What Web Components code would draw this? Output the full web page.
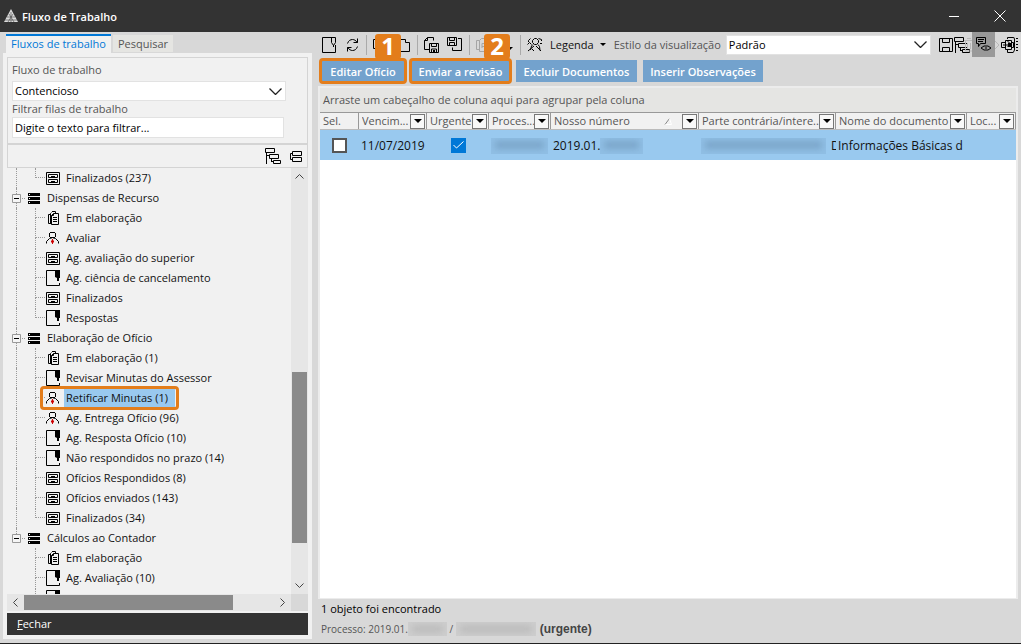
<!DOCTYPE html>
<html lang="pt-BR">
<head>
<meta charset="utf-8">
<title>Fluxo de Trabalho</title>
<style>
html, body { margin: 0; height: 100%; }
body { font: 11px/16px "Open Sans", "Noto Sans", sans-serif; color: #111; background: #d8d8d8; overflow: hidden; }
</style>
</head>
<body>
<flow-app></flow-app>
<script>
const define = (name, html, setup) => {
  const template = document.createElement('template');
  template.innerHTML = html;
  customElements.define(name, class extends HTMLElement {
    constructor() {
      super();
      this.attachShadow({ mode: 'open' }).append(template.content.cloneNode(true));
    }
    connectedCallback() { if (setup) setup.call(this, this.shadowRoot); }
  });
};

/* Icons: [width, height, markup]; strokes sit on half pixels to stay sharp */
const ICONS = {
  logo: [14, 14, '<path d="M7 0L14 13H0Z" fill="#ddd" stroke="none"/><path d="M7 3v10M5 5l5 8M9 5l-5 8M3 8h8M1 11h12" stroke="#555" stroke-width=".7"/>'],
  min: [11, 11, '<path d="M0 5.500h10" stroke="#fff"/>'],
  close: [12, 12, '<path d="M.5.5l11 11M11.500.5l-11 11" stroke="#fff"/>'],
  cabinet: [14, 13, '<path d="M.5.5h13v12H.5zM2.500 2.500h9v3h-9zM2.500 7.500h9v3h-9zM5 4.500h4M5 9.500h4"/>'],
  note: [14, 16, '<path d="M.5.5h13v15H.5z"/><path d="M9 0h5v7l-1 1v3h-2V8L9 7z" fill="#000" stroke="none"/><path d="M13.500 8v5" stroke="#f1f1f1"/>'],
  docs: [14, 14, '<path d="M4 3.500H2.500v9H5M4.500 12V2.500l1-1M6 .500h3.500v2M5.500 4.500v9h7v-11h-5zM5.500 4.500h2v-2M7 6.500h4M7 8.500h4M7 10.500h4"/>'],
  person: [13, 12, '<path d="M4 .5h5M3.500 1v4M9.500 1v4M4 5.500h5M5 6v1M8 6v1M4.500 6.500h-1L.5 9.500v2M8.500 6.500h1l3 3v2"/><path d="M6.500 7v5" stroke="#c00"/><path d="M5 8.500h3v2H5z" fill="#c00" stroke="none"/>'],
  list: [12, 11, '<path d="M0 0h12v3H0zM0 4h12v3H0zM0 8h12v3H0z" fill="#000" stroke="none"/><path d="M1 1.500h1M1 5.500h1M1 9.500h1" stroke="#fff"/>'],
  tree: [16, 16, '<path d="M.5.5h9v4h-9zM1.500 5v11M1.500 7.500h3M4.500 6.500h9v4h-9zM6.500 11v3M6.500 13.500h2M8.500 12.500h7v3h-7z"/>'],
  collapse: [12, 11, '<path d="M2.500.5h9v4h-9zM2.500 6.500h9v4h-9zM2 2.500H.5v6H2"/>'],
  minus: [9, 9, '<path d="M.5.5h8v8h-8z" stroke="#999" fill="#f5f5f5"/><path d="M2 4.500h5"/>'],
  page: [14, 16, '<path d="M.5.5h13v5l-2 3-2-3v-5M.5.500v15h13V8M11.500 8v2"/>'],
  refresh: [13, 14, '<path d="M1.500 5.500c1-3 3-4 5-4 2 0 3 1 5 3M11.500.500v4h-4M11.500 8.500c-1 3-3 4-5 4-2 0-3-1-5-3M1.500 13.500v-4h4"/>'],
  folders: [37, 14, '<path d="M4 1.500H.5v9H4M26.500 13.500h10v-9h-4v-3h-6z"/>'],
  savepage: [15, 16, '<path d="M5.500 12.500h-5v-9l3-3h6v3M3.500.500v3h-3M5.500 6.500h9v9h-9zM7.500 6.500v3h5v-3M7.500 15v-3h5v3"/><path d="M9 13h2v2H9z" fill="#000" stroke="none"/>'],
  pagesave: [15, 15, '<path d="M.5.5h9v8h-9zM2.500.500v3h5v-3M2.500 8V5.500h5V8M11 1.500h3.500v12h-9v-3"/>'],
  preview: [14, 14, '<path d="M3.500 11.500h-3v-9h3M3.500 13.500v-11l2-2h7v13zM6 10V5.500h3v3H6" stroke="#a5a5a5"/>'],
  people: [15, 15, '<path d="M5.500 3.500l2-2h2l2 2v2l-2 2h-2l-2-2zM6 7.500L4.500 9l-1 4M11 7.500l1.500 2 .5 4M1.500 5V3.500l2-2M.5 7.500l2-2 2 2M14.500 4V2.500l-3-1M13 6.500h2M1 14l6-5M14 14L9 9M5 12l2 2"/>'],
  caret: [6, 3, '<path d="M0 0h6L3 3z" fill="#000" stroke="none"/>'],
  filter: [8, 4, '<path d="M0 0h8L4 4z" fill="#000" stroke="none"/>'],
  sort: [8, 7, '<path d="M1 6.500L5.500.500" stroke="#888"/><path d="M5.500.5l2 6h-6" stroke="#fff"/>'],
  floppy: [14, 14, '<path d="M.5.5h13v13H.5zM3.500.500v4h7v-4M3.500 13V9.500h7V13"/>'],
  trash: [11, 14, '<path d="M0 2.500h10M3 .5h4M1.500 3v10h7V3M3.500 5v6M6.500 5v6" stroke="#b8b8b8"/>'],
  comment: [17, 15, '<path d="M1.500.5h9v6h-5l-2 3v-3h-2zM3 2.500h6M3 4.500h5M6 11l3-2h4l3 2-3 2H9zM10 11h2"/>'],
  diamond: [5, 8, '<path d="M0 0l4 4-4 4" stroke="#b8b8b8"/>'],
  gear: [17, 16, '<path d="M.5 5.500h4v5h-4zM2 8h8M4.500 3.500h6v9h-6zM6.500 4l4 4M6.500 10l4-4M6.500 2V.5h6M6.500 13v2.500h6M12.500 0l1 2v11l-1 2M15 1.500h2M15 4.500h2M15 7.500h2M15 10.500h2M15 13.500h2M10.500 5.500h2v5h-2"/><path d="M7 6h4v4H7z" fill="#000" stroke="none"/>'],
  up: [9, 5, '<path d="M.5 4.500l4-4 4 4" stroke="#444"/>'],
  down: [9, 5, '<path d="M.5.5l4 4 4-4" stroke="#444"/>'],
  left: [5, 9, '<path d="M4.500.500l-4 4 4 4" stroke="#444"/>'],
  right: [5, 9, '<path d="M.5.5l4 4-4 4" stroke="#444"/>'],
  chevron: [13, 7, '<path d="M.5.5l6 6 6-6" stroke="#222" stroke-width="1.300"/>'],
  tick: [11, 8, '<path d="M.5 4l3 3L10.500.500" stroke="#fff"/>']
};
customElements.define('ui-icon', class extends HTMLElement {
  connectedCallback() {
    if (this.shadowRoot) return;
    const [w, h, body] = ICONS[this.getAttribute('name')];
    this.attachShadow({ mode: 'open' }).innerHTML =
      `<style>:host{display:block;flex:none;width:${w}px;height:${h}px}svg{display:block}</style>
       <svg width="${w}" height="${h}" viewBox="0 0 ${w} ${h}" fill="none" stroke="#000" aria-hidden="true">${body}</svg>`;
  }
});

define('title-bar', `<style>
:host { display: flex; align-items: center; height: 32px; background: #333; color: #fff; padding: 0 15px 0 4px; }
h1 { flex: 1; margin: 1px 0 0 4px; font-size: 11px; line-height: 16px; font-weight: 600; }
button { border: 0; padding: 0; background: none; display: block; margin-left: 34px; }
</style><ui-icon name="logo"></ui-icon><h1><slot></slot></h1>
<button aria-label="Minimizar"><ui-icon name="min"></ui-icon></button>
<button aria-label="Fechar janela"><ui-icon name="close"></ui-icon></button>`);

define('blurred-text', `<style>
:host { display: inline-block; vertical-align: middle; height: 14px; overflow: hidden; background: var(--a); }
i { display: block; height: 8px; margin: 3px 4px; background: var(--b); filter: blur(3px); }
</style><i></i>`);

define('drop-down', `<style>
:host { display: grid; align-items: center; background: #fff; border: 1px solid #e2e2e2; box-sizing: border-box; }
select { grid-area: 1/1; appearance: none; border: 0; margin: 0; padding: 0 2px; width: 100%; font: inherit; color: #000; background: none; outline: 0; }
ui-icon { grid-area: 1/1; justify-self: end; margin-right: 3px; pointer-events: none; }
</style><select><option></option></select><ui-icon name="chevron"></ui-icon>`, function (root) {
  root.querySelector('select').setAttribute('aria-label', this.getAttribute('label'));
  root.querySelector('option').textContent = this.getAttribute('value');
});

define('scroll-bar', `<style>
:host { display: flex; flex-direction: column; background: #e6e6e6; }
:host([horizontal]) { flex-direction: row; }
button { border: 0; padding: 0; background: none; flex: none; width: 17px; height: 17px; display: grid; place-items: center; }
:host([horizontal]) button { height: 100%; }
.before { flex: var(--before) 0 0; } .thumb { flex: var(--thumb) 0 0; background: #8a8a8a; } .after { flex: var(--after) 0 0; }
:host(:not([horizontal])) .thumb { margin: 0 1px; }
:host([horizontal]) .thumb { margin: 1px 0; }
</style><button class="start" aria-label="Voltar"></button><div class="before"></div><div class="thumb"></div><div class="after"></div><button class="end" aria-label="Avançar"></button>`, function (root) {
  const h = this.hasAttribute('horizontal');
  root.querySelector('.start').innerHTML = `<ui-icon name="${h ? 'left' : 'up'}"></ui-icon>`;
  root.querySelector('.end').innerHTML = `<ui-icon name="${h ? 'right' : 'down'}"></ui-icon>`;
});

define('tree-group', `<style>
:host { display: block; }
.head { display: grid; grid-template-columns: 5px 9px 7px 19px auto; align-items: center; height: 20px; position: relative; justify-content: start; }
.head::before { content: ""; position: absolute; left: 9px; top: 0; bottom: 0; border-left: 1px dotted #999; }
:host([last]) .head::before { bottom: 10px; }
.head > * { position: relative; }
.dots { border-top: 1px dotted #999; margin: 0 3px 0 1px; }
:host([bare]) .head { display: none; }
</style><div class="head"><span></span><ui-icon name="minus"></ui-icon><span class="dots"></span><ui-icon name="list"></ui-icon><span class="name"></span></div><slot></slot>`, function (root) {
  root.querySelector('.name').textContent = this.getAttribute('label') || '';
});

define('tree-item', `<style>
:host { display: grid; grid-template-columns: 9px 19px 11px 18px auto; justify-content: start; height: 20px; position: relative; }
.trunk { grid-column: 2; border-left: 1px dotted #999; }
:host([root-end]) .trunk { border-color: transparent; }
.top, .bottom { border-left: 1px dotted #999; height: 9px; margin-right: 1px; }
.top { border-bottom: 1px dotted #999; }
:host([end]) .bottom { border-color: transparent; }
ui-icon { align-self: center; }
.label { align-self: center; padding: 1px 2px 2px; white-space: nowrap; }
:host([selected]) .label { background: #99c9ef; min-width: 107px; }
:host([selected])::after { content: ""; position: absolute; left: 33px; top: -2px; width: 133px; height: 18px; border: 3px solid #e37d1b; border-radius: 4px; }
</style><span class="trunk"></span><span><div class="top"></div><div class="bottom"></div></span><span class="icon"></span><span class="label"><slot></slot></span>`, function (root) {
  const icon = document.createElement('ui-icon');
  icon.setAttribute('name', this.getAttribute('icon'));
  root.querySelector('.icon')?.replaceWith(icon);
});

define('flow-panel', `<style>
:host { display: flex; flex-direction: column; width: 309px; flex: none; padding: 2px 0 4px 3px; }
.tabs { display: flex; align-items: flex-end; gap: 2px; padding-left: 3px; }
.tabs button { border: 0; margin: 0 0 1px; font: inherit; background: #e5e5e2; color: #555; padding: 1px 5px 0; height: 17px; }
.tabs button.on { height: 19px; margin: 0; background: #f1f1f1; color: #0078d7; border-top: 2px solid #0078d7; padding: 0 5px 1px; }
.card { flex: 1; min-height: 0; background: #f1f1f1; padding: 4px; display: flex; flex-direction: column; }
.box { border: 1px solid #d4d4d4; color: #555; }
.form { padding: 4px 21px 5px 4px; border-bottom: 0; }
label { display: block; line-height: 16px; }
drop-down { height: 20px; margin: 3px 0 0; }
input { display: block; box-sizing: border-box; width: calc(100% - 2px); height: 21px; border: 1px solid #e2e2e2; padding: 0 2px; font: inherit; color: #000; background: #fff; outline: 0; }
.tools { display: flex; justify-content: flex-end; align-items: center; gap: 9px; height: 22px; padding-right: 5px; border-top-width: 2px; }
.tools button { border: 0; padding: 0; background: none; }
.view { flex: 1; min-height: 0; display: grid; grid-template: minmax(0, 1fr) 17px / minmax(0, 1fr) 17px; background: #d8d8d8; }
.tree { overflow: hidden; background: #f1f1f1; }
.v { --before: 187; --thumb: 171; --after: 34; }
.h { --before: 0; --thumb: 209; --after: 41; }
.close { flex: none; margin-top: 2px; height: 22px; border: 0; background: #333; color: #fff; font: inherit; text-align: left; padding: 0 10px; }
</style>
<div class="tabs" role="tablist"><button class="on" role="tab">Fluxos de trabalho</button><button role="tab">Pesquisar</button></div>
<div class="card">
  <div class="box form"><label>Fluxo de trabalho</label><drop-down label="Fluxo de trabalho" value="Contencioso"></drop-down>
  <label for="filter">Filtrar filas de trabalho</label><input id="filter" type="text" value="Digite o texto para filtrar..."></div>
  <div class="box tools"><button aria-label="Expandir"><ui-icon name="tree"></ui-icon></button><button aria-label="Recolher"><ui-icon name="collapse"></ui-icon></button></div>
  <div class="view">
    <div class="tree">
      <tree-group bare><tree-item icon="cabinet" end>Finalizados (237)</tree-item></tree-group>
      <tree-group label="Dispensas de Recurso">
        <tree-item icon="docs">Em elaboração</tree-item>
        <tree-item icon="person">Avaliar</tree-item>
        <tree-item icon="cabinet">Ag. avaliação do superior</tree-item>
        <tree-item icon="note">Ag. ciência de cancelamento</tree-item>
        <tree-item icon="cabinet">Finalizados</tree-item>
        <tree-item icon="note" end>Respostas</tree-item>
      </tree-group>
      <tree-group label="Elaboração de Ofício">
        <tree-item icon="docs">Em elaboração (1)</tree-item>
        <tree-item icon="note">Revisar Minutas do Assessor</tree-item>
        <tree-item icon="person" selected>Retificar Minutas (1)</tree-item>
        <tree-item icon="person">Ag. Entrega Ofício (96)</tree-item>
        <tree-item icon="note">Ag. Resposta Ofício (10)</tree-item>
        <tree-item icon="note">Não respondidos no prazo (14)</tree-item>
        <tree-item icon="cabinet">Ofícios Respondidos (8)</tree-item>
        <tree-item icon="cabinet">Ofícios enviados (143)</tree-item>
        <tree-item icon="cabinet" end>Finalizados (34)</tree-item>
      </tree-group>
      <tree-group label="Cálculos ao Contador" last>
        <tree-item icon="docs" root-end>Em elaboração</tree-item>
        <tree-item icon="note" root-end>Ag. Avaliação (10)</tree-item>
        <tree-item icon="note" root-end></tree-item>
      </tree-group>
    </div>
    <scroll-bar class="v"></scroll-bar>
    <scroll-bar class="h" horizontal></scroll-bar>
  </div>
  <button class="close"><u>F</u>echar</button>
</div>`);

define('tool-bar', `<style>
:host { display: flex; align-items: center; height: 25px; padding: 0 3px 0 4px; color: #555; white-space: nowrap; }
button { border: 0; margin: 0; padding: 0; background: none; font: inherit; color: #111; display: flex; align-items: center; }
hr { width: 1px; height: 20px; border: 0; margin: 0 6px 0 7px; background: #aaa; flex: none; }
.gap { margin-left: 10px; }
.near { margin-left: 8px; }
drop-down { flex: 1; height: 20px; margin: 0 8px 0 5px; }
.on { background: #999; height: 25px; width: 23px; justify-content: center; margin-left: -3px; }
.end { margin-left: 1px; }
.preview { gap: 17px; }
.preview ui-icon[name=caret] { margin-top: 8px; }
.legend { margin: 0 8px; gap: 6px; }
.trash { margin-left: -6px; }
</style>
<button aria-label="Novo"><ui-icon name="page"></ui-icon></button>
<button class="gap" aria-label="Atualizar"><ui-icon name="refresh"></ui-icon></button><hr>
<button aria-label="Abrir"><ui-icon name="folders"></ui-icon></button><hr>
<button aria-label="Salvar documento"><ui-icon name="savepage"></ui-icon></button>
<button class="near" aria-label="Salvar cópia"><ui-icon name="pagesave"></ui-icon></button><hr>
<button class="preview" aria-label="Visualizar"><ui-icon name="preview"></ui-icon><ui-icon name="caret"></ui-icon></button><hr>
<button aria-label="Usuários"><ui-icon name="people"></ui-icon></button>
<button class="legend">Legenda <ui-icon name="caret"></ui-icon></button>
<span>Estilo da visualização</span><drop-down label="Estilo da visualização" value="Padrão"></drop-down>
<button aria-label="Salvar estilo"><ui-icon name="floppy"></ui-icon></button>
<button class="end" aria-label="Agrupar"><ui-icon name="tree"></ui-icon></button>
<button class="trash" aria-label="Excluir"><ui-icon name="trash"></ui-icon></button>
<button class="on" aria-label="Observações"><ui-icon name="comment"></ui-icon></button>
<ui-icon name="diamond"></ui-icon>
<button class="end" aria-label="Configurar"><ui-icon name="gear"></ui-icon></button>`);

define('action-button', `<style>
:host { display: block; position: relative; flex: none; }
button { display: block; box-sizing: border-box; width: 100%; height: 22px; border: 0; padding: 1px 0 0; background: #73a2cd; color: #fff; font: inherit; font-weight: 600; white-space: nowrap; }
:host([step])::before { content: ""; position: absolute; inset: -2px; border: 3px solid #e37d1b; border-radius: 4px; pointer-events: none; }
b { display: none; position: absolute; right: 4px; top: -26px; width: 26px; height: 25px; border-radius: 3px; background: #e37d1b; color: #fff; font-size: 24px; line-height: 24px; font-weight: 700; text-align: center; }
:host([step]) b { display: block; }
:host([step="2"]) b { right: 0; }
</style><button><slot></slot></button><b></b>`, function (root) {
  root.querySelector('b').textContent = this.getAttribute('step') || '';
});

define('data-grid', `<style>
:host { display: block; background: #fff; border: 2px solid #ececec; border-bottom-width: 1px; overflow: hidden; }
.group { height: 24px; line-height: 24px; padding-left: 3px; background: #e5e5e3; color: #555; }
table { width: 100%; table-layout: fixed; border-collapse: separate; border-spacing: 0; }
th { box-sizing: border-box; height: 18px; padding: 0; border-top: 1px solid #999; border-bottom: 1px solid #bbb; background: #f1f1f1; font-weight: 400; color: #555; }
.th { display: flex; align-items: center; height: 16px; padding: 0 1px 0 3px; border-right: 1px solid #999; }
.th span { flex: 1; min-width: 0; overflow: hidden; white-space: nowrap; text-align: left; }
.th button { flex: none; box-sizing: border-box; width: 15px; height: 15px; border: 1px solid #777; background: #f8f8f8; padding: 0; display: grid; place-items: center; }
.th ui-icon[name=sort] { margin-right: 10px; }
td { box-sizing: border-box; height: 30px; padding: 1px 0 0 2px; background: #99c9ef; color: #111; font-size: 12px; line-height: 18px; white-space: nowrap; overflow: hidden; }
td.check { padding: 0; }
.cell { display: flex; align-items: center; overflow: hidden; }
.cell span { overflow: hidden; }
input { appearance: none; display: block; box-sizing: border-box; width: 15px; height: 15px; margin: 0 auto; border: 2px solid #555; background: #fff; }
label { display: grid; place-items: center; }
label > * { grid-area: 1/1; }
input:checked { background: #0078d7; border-color: #0078d7; }
label ui-icon { pointer-events: none; z-index: 1; }
blurred-text { --a: #90bfe5; --b: #7ba6ca; height: 16px; flex: none; }
.cut { width: 5px; margin-left: auto; }
</style>
<div class="group">Arraste um cabeçalho de coluna aqui para agrupar pela coluna</div>
<table><colgroup><col style="width:39px"><col style="width:68px"><col style="width:62px"><col style="width:62px"><col><col style="width:137px"><col style="width:131px"><col style="width:49px"></colgroup>
<thead><tr></tr></thead>
<tbody><tr>
<td class="check"><input type="checkbox" aria-label="Selecionar"></td><td>11/07/2019</td>
<td class="check"><label><input type="checkbox" checked aria-label="Urgente"><ui-icon name="tick"></ui-icon></label></td>
<td><blurred-text style="width:57px"></blurred-text></td>
<td><div class="cell">2019.01.<blurred-text style="width:43px"></blurred-text></div></td>
<td><div class="cell"><blurred-text style="width:125px"></blurred-text><span class="cut">D</span></div></td>
<td><div class="cell">Informações Básicas d</div></td><td></td>
</tr></tbody></table>`, function (root) {
  const row = root.querySelector('thead tr');
  const heads = ['Sel.', 'Vencim...', 'Urgente', 'Proces...', 'Nosso número', 'Parte contrária/intere...', 'Nome do documento', 'Loc...'];
  row.innerHTML = heads.map((t, i) => `<th><div class="th"><span>${t}</span>${i === 4 ? '<ui-icon name="sort"></ui-icon>' : ''}${i ? `<button aria-label="Filtrar ${t}"><ui-icon name="filter"></ui-icon></button>` : ''}</div></th>`).join('');
});

define('flow-app', `<style>
:host { display: flex; flex-direction: column; height: 100vh; box-sizing: border-box; border-bottom: 1px solid #222; background: #d8d8d8; }
.body { flex: 1; min-height: 0; display: flex; }
main { flex: 1; min-width: 0; display: flex; flex-direction: column; margin-left: 6px; }
.actions { display: flex; gap: 6px; padding: 3px; }
data-grid { flex: 1; margin: 1px 3px 0 0; }
footer { padding: 2px 3px 6px; color: #555; }
footer p { margin: 0; line-height: 16px; display: flex; align-items: center; white-space: pre; }
footer p + p { margin-top: 4px; font-size: 10px; }
footer p:first-child { color: #000; }
footer b { margin-left: 4px; font: bold 12px/16px "Liberation Sans", sans-serif; color: #444; }
footer blurred-text { --a: #cecece; --b: #bdbdbd; }
</style>
<title-bar>Fluxo de Trabalho</title-bar>
<div class="body"><flow-panel></flow-panel>
<main><tool-bar></tool-bar>
<div class="actions"><action-button step="1" style="width:84px">Editar Ofício</action-button><action-button step="2" style="width:99px">Enviar a revisão</action-button><action-button style="width:121px">Excluir Documentos</action-button><action-button style="width:120px">Inserir Observações</action-button></div>
<data-grid></data-grid>
<footer><p>1 objeto foi encontrado</p><p>Processo: 2019.01.<blurred-text style="width:39px"></blurred-text> / <blurred-text style="width:80px"></blurred-text> <b>(urgente)</b></p></footer>
</main></div>`);
</script>
</body>
</html>
